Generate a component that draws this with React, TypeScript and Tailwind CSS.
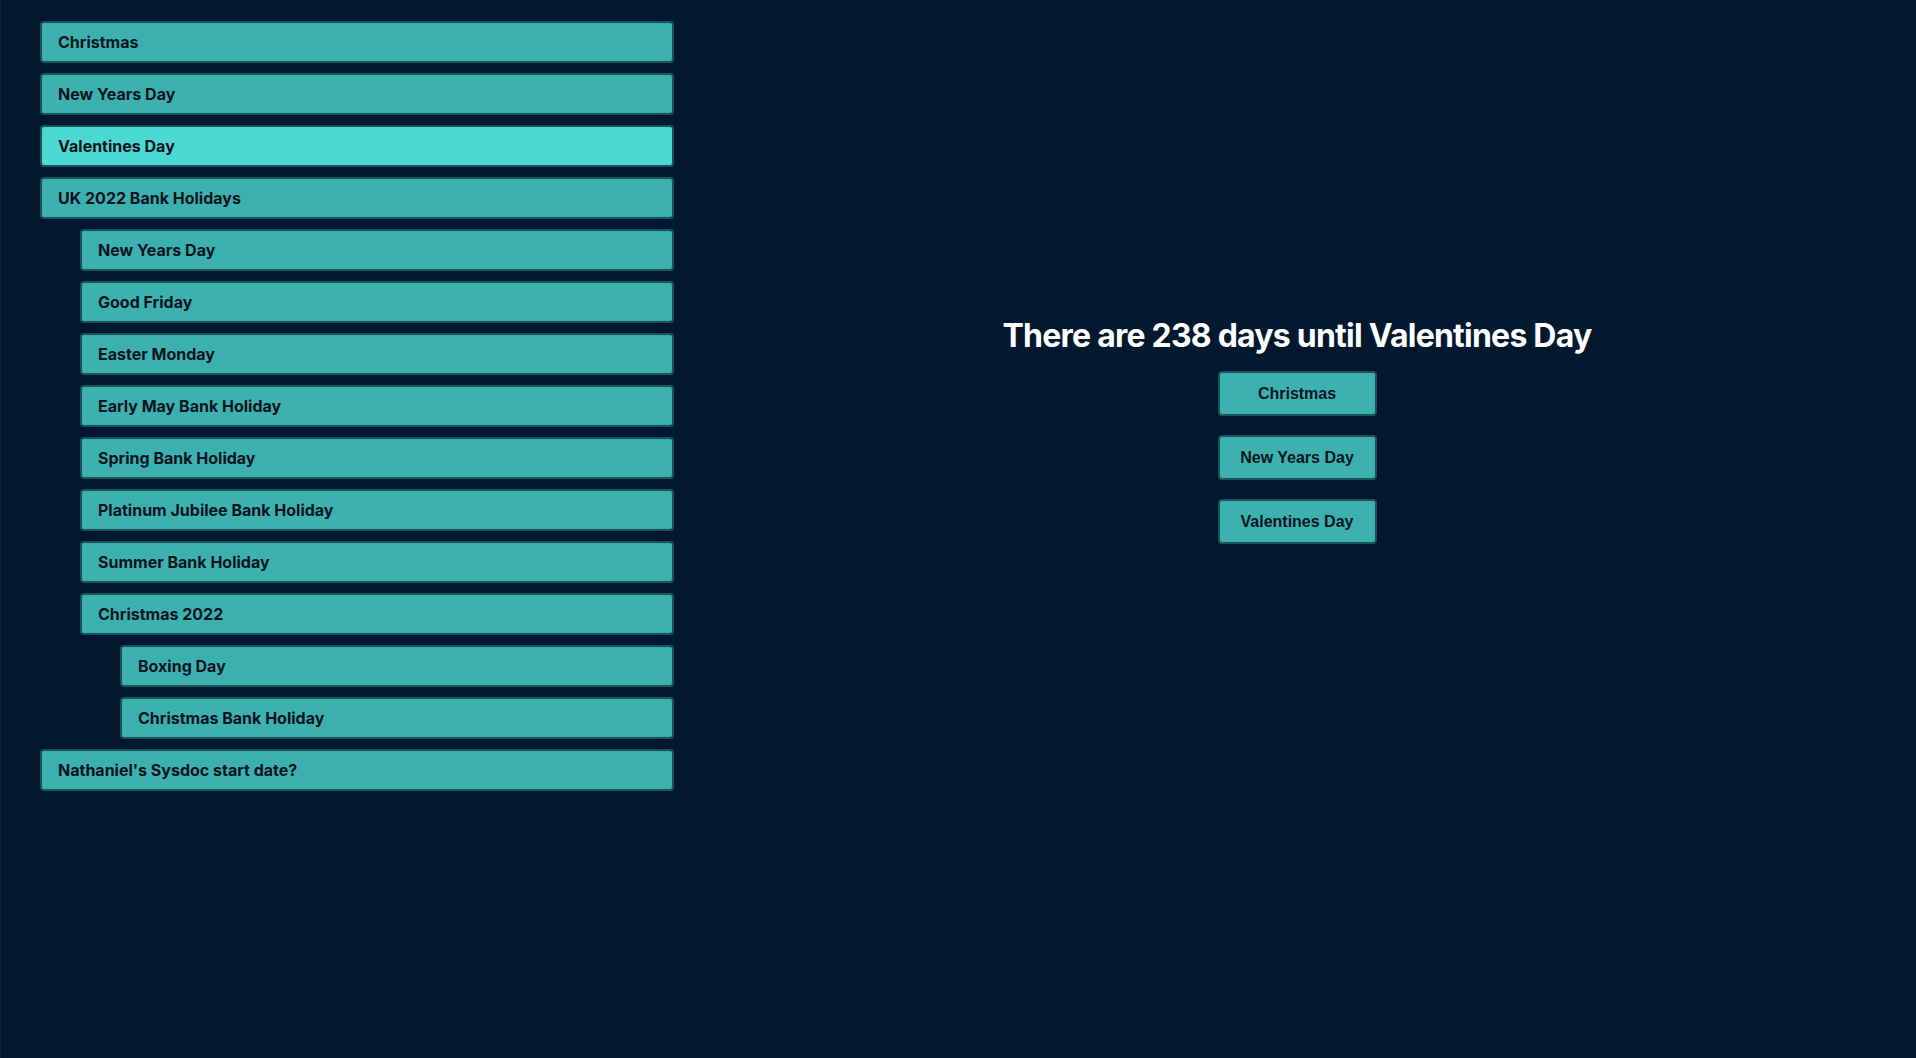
import React from 'react';

type Holiday = {
  name: string;
  children?: Holiday[];
};

const holidays: Holiday[] = [
  { name: 'Christmas' },
  { name: 'New Years Day' },
  { name: 'Valentines Day' },
  {
    name: 'UK 2022 Bank Holidays',
    children: [
      { name: 'New Years Day' },
      { name: 'Good Friday' },
      { name: 'Easter Monday' },
      { name: 'Early May Bank Holiday' },
      { name: 'Spring Bank Holiday' },
      { name: 'Platinum Jubilee Bank Holiday' },
      { name: 'Summer Bank Holiday' },
      {
        name: 'Christmas 2022',
        children: [{ name: 'Boxing Day' }, { name: 'Christmas Bank Holiday' }],
      },
    ],
  },
  { name: "Nathaniel's Sysdoc start date?" },
];

const selected = 'Valentines Day';

const HolidayItem = ({ item, depth }: { item: Holiday; depth: number }) => (
  <>
    <button
      className={
        'flex h-[42px] w-full items-center rounded-[4px] border-2 border-[#1b5258] pl-[16px] text-left text-[16px] font-bold text-[#06131c] ' +
        (depth === 0 && item.name === selected ? 'bg-[#4dd9d3]' : 'bg-[#3db1b0]')
      }
    >
      {item.name}
    </button>
    {item.children && (
      <div className="flex flex-col gap-[10px] pl-10">
        {item.children.map((child, i) => (
          <HolidayItem key={i} item={child} depth={depth + 1} />
        ))}
      </div>
    )}
  </>
);

const App = () => (
  <div
    className="flex min-h-screen border-l border-[#0e2340] bg-[#01182e]"
    style={{ fontFamily: 'Inter, "Noto Sans", sans-serif' }}
  >
    <div className="flex w-[673px] shrink-0 flex-col gap-[10px] pl-[39px] pt-[21px]">
      {holidays.map((h, i) => (
        <HolidayItem key={i} item={h} depth={0} />
      ))}
    </div>
    <div className="flex flex-1 flex-col items-center pl-[4px] pt-[316px]">
      <h1 className="text-[32px] font-bold leading-[40px] tracking-[-0.024em] text-white">
        There are 238 days until Valentines Day
      </h1>
      <div
        className="mt-[15px] flex flex-col gap-[19px]"
        style={{ fontFamily: '"Liberation Sans", Arial, sans-serif' }}
      >
        {['Christmas', 'New Years Day', 'Valentines Day'].map((name) => (
          <button
            key={name}
            className="h-[45px] w-[159px] rounded-[4px] border-2 border-[#1b5258] bg-[#3db1b0] text-[16px] font-bold text-[#06131c]"
          >
            {name}
          </button>
        ))}
      </div>
    </div>
  </div>
);

export default App;
